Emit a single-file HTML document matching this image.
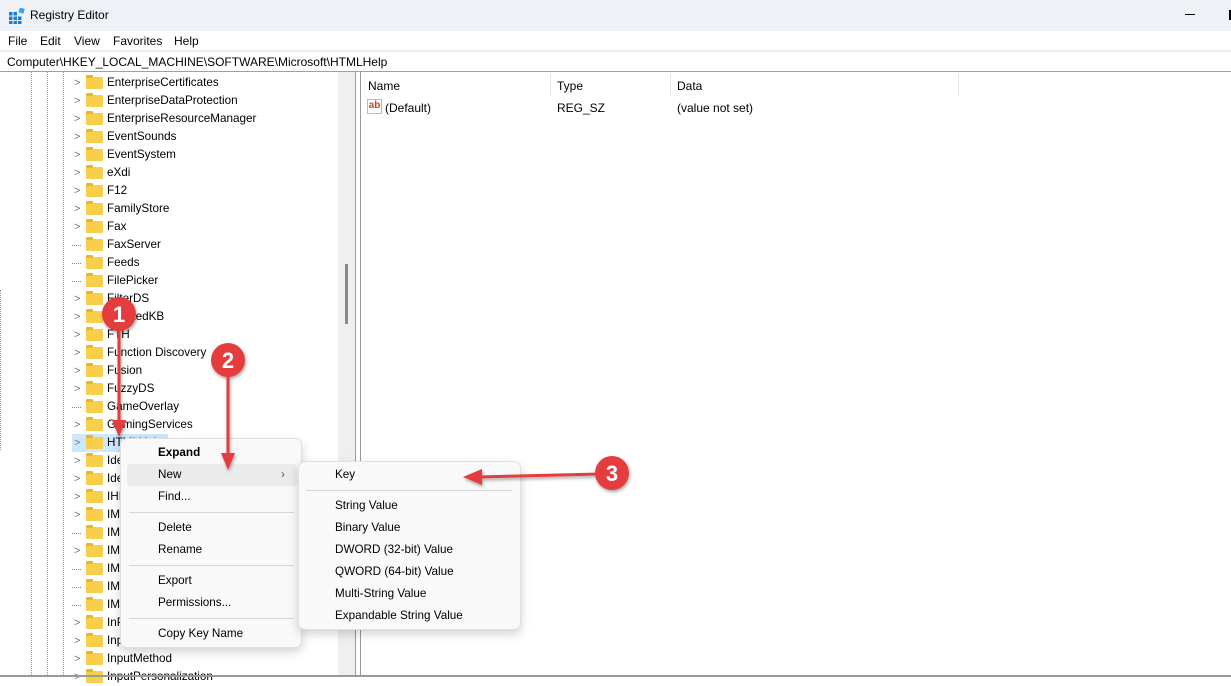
<!DOCTYPE html>
<html><head><style>
*{margin:0;padding:0;box-sizing:border-box}
body{width:1231px;height:677px;overflow:hidden;background:#fff;font-family:"Liberation Sans",sans-serif;font-size:12px;color:#000;position:relative}
.abs{position:absolute}
.title{left:0;top:0;width:1231px;height:31px;background:#eef2f6}
.row{position:absolute;height:18px;line-height:18px;white-space:nowrap;font-size:11.7px}
.fold{position:absolute;width:17px;height:12px;background:#f8cf4a;border-radius:1px;top:3px}
.fold:before{content:"";position:absolute;left:0;top:-2px;width:7px;height:3px;background:#e8b530;border-radius:1px 1px 0 0}
.chev{position:absolute;color:#777;font-size:11px;top:0}
.dot{position:absolute;border-top:1px dotted #888;width:9px;top:9px}
.vd{position:absolute;top:72px;height:605px;border-left:1px dotted #999}
.menu{background:#f9f9f9;border:1px solid #e0e0e0;border-radius:7px;box-shadow:0 4px 10px rgba(0,0,0,.18)}
.mi{position:absolute;height:22px;line-height:22px;white-space:nowrap;font-size:11.7px}
.sep{position:absolute;height:1px;background:#d6d6d6}
</style></head><body>
<div class="abs title"></div>
<svg class="abs" style="left:9px;top:8px" width="16" height="16" viewBox="0 0 16 16">
<g fill="#1a7fd4"><rect x="0" y="4" width="3.5" height="3.5"/><rect x="4.5" y="4" width="3.5" height="3.5"/><rect x="0" y="8.5" width="3.5" height="3.5"/><rect x="4.5" y="8.5" width="3.5" height="3.5"/><rect x="9" y="8.5" width="3.5" height="3.5"/><rect x="0" y="13" width="3.5" height="3"/><rect x="4.5" y="13" width="3.5" height="3"/><rect x="9" y="13" width="3.5" height="3"/></g><rect x="10" y="0" width="5" height="5" fill="#3aa0f0" transform="rotate(15 12 3)"/></svg>
<div class="abs" style="left:30px;top:8px;font-size:12px">Registry Editor</div>
<div class="abs" style="left:1185px;top:14px;width:10px;height:1px;background:#000"></div>
<div class="abs" style="left:1229px;top:10px;width:2px;height:10px;background:#000"></div>
<div class="abs" style="left:8px;top:34px">File</div>
<div class="abs" style="left:40px;top:34px">Edit</div>
<div class="abs" style="left:74px;top:34px">View</div>
<div class="abs" style="left:113px;top:34px">Favorites</div>
<div class="abs" style="left:174px;top:34px">Help</div>
<div class="abs" style="left:0;top:50px;width:1231px;height:2px;background:#eeeeee"></div>
<div class="abs" style="left:7px;top:55px">Computer\HKEY_LOCAL_MACHINE\SOFTWARE\Microsoft\HTMLHelp</div>
<div class="abs" style="left:0;top:71px;width:1231px;height:1px;background:#a0a0a0"></div>
<div class="vd" style="left:31px"></div><div class="vd" style="left:47px"></div><div class="vd" style="left:63px"></div>
<div class="abs" style="left:0;top:290px;width:2px;height:160px;border-left:1px dotted #999"></div>
<div class="abs" style="left:72px;top:434px;width:96px;height:18px;background:#cce8ff"></div>
<div id="tree"></div>
<div class="abs" style="left:338px;top:72px;width:17px;height:605px;background:#efefef"></div>
<div class="abs" style="left:345px;top:264px;width:3px;height:60px;background:#8a8a8a"></div>
<div class="abs" style="left:355px;top:72px;width:1px;height:605px;background:#999"></div>
<div class="abs" style="left:360px;top:72px;width:1px;height:605px;background:#999"></div>
<div class="abs" style="left:0;top:675px;width:1231px;height:2px;background:#999"></div>
<div class="abs" style="left:368px;top:79px">Name</div>
<div class="abs" style="left:557px;top:79px">Type</div>
<div class="abs" style="left:677px;top:79px">Data</div>
<div class="abs" style="left:550px;top:74px;width:1px;height:22px;background:#e5e5e5"></div>
<div class="abs" style="left:670px;top:74px;width:1px;height:22px;background:#e5e5e5"></div>
<div class="abs" style="left:958px;top:74px;width:1px;height:22px;background:#e5e5e5"></div>
<div class="abs" style="left:367px;top:99px;width:15px;height:15px;border:1px solid #bbb;background:#fff;color:#d04020;font-weight:bold;font-size:10px;line-height:12px;text-align:center">ab</div>
<div class="abs" style="left:385px;top:101px">(Default)</div>
<div class="abs" style="left:557px;top:101px">REG_SZ</div>
<div class="abs" style="left:677px;top:101px">(value not set)</div>
<div class="abs menu" style="left:120px;top:438px;width:182px;height:210px"></div>
<div class="abs" style="left:127px;top:464px;width:170px;height:22px;background:#ebebeb;border-radius:4px"></div>
<div class="mi" style="left:158px;top:442px;font-weight:bold">Expand</div>
<div class="mi" style="left:158px;top:464px">New</div>
<div class="mi" style="left:281px;top:464px;color:#555">›</div>
<div class="mi" style="left:158px;top:486px">Find...</div>
<div class="sep" style="left:129px;top:512px;width:165px"></div>
<div class="mi" style="left:158px;top:517px">Delete</div>
<div class="mi" style="left:158px;top:539px">Rename</div>
<div class="sep" style="left:129px;top:565px;width:165px"></div>
<div class="mi" style="left:158px;top:570px">Export</div>
<div class="mi" style="left:158px;top:592px">Permissions...</div>
<div class="sep" style="left:129px;top:618px;width:165px"></div>
<div class="mi" style="left:158px;top:623px">Copy Key Name</div>
<div class="abs menu" style="left:298px;top:461px;width:223px;height:169px"></div>
<div class="mi" style="left:335px;top:464px">Key</div>
<div class="sep" style="left:306px;top:490px;width:206px"></div>
<div class="mi" style="left:335px;top:495px">String Value</div>
<div class="mi" style="left:335px;top:517px">Binary Value</div>
<div class="mi" style="left:335px;top:539px">DWORD (32-bit) Value</div>
<div class="mi" style="left:335px;top:561px">QWORD (64-bit) Value</div>
<div class="mi" style="left:335px;top:583px">Multi-String Value</div>
<div class="mi" style="left:335px;top:605px">Expandable String Value</div>
<svg class="abs" style="left:0;top:0" width="1231" height="677">
<defs><filter id="s"><feDropShadow dx="1" dy="2" stdDeviation="1.5" flood-opacity=".35"/></filter></defs>
<g stroke="#e53c3c" stroke-width="3" fill="#e53c3c" filter="url(#s)">
<line x1="119" y1="320" x2="119" y2="425"/><polygon points="112,420 126,420 119,437" stroke="none"/>
<line x1="228" y1="370" x2="228" y2="458"/><polygon points="221,453 235,453 228,470" stroke="none"/>
<line x1="600" y1="474" x2="478" y2="477"/><polygon points="482,469 482,485 463,477" stroke="none"/>
<circle cx="119" cy="314" r="17" stroke="none"/><circle cx="228" cy="360" r="17" stroke="none"/><circle cx="612" cy="473" r="17" stroke="none"/>
</g>
<g fill="#fff" font-family="Liberation Sans" font-weight="bold" font-size="22" text-anchor="middle">
<text x="119" y="322">1</text><text x="228" y="368">2</text><text x="612" y="481">3</text></g>
</svg>
<script>
var items=[["EnterpriseCertificates",1],["EnterpriseDataProtection",1],["EnterpriseResourceManager",1],["EventSounds",1],["EventSystem",1],["eXdi",1],["F12",1],["FamilyStore",1],["Fax",1],["FaxServer",0],["Feeds",0],["FilePicker",0],["FilterDS",1],["FlightedKB",1],["FTH",1],["Function Discovery",1],["Fusion",1],["FuzzyDS",1],["GameOverlay",0],["GamingServices",1],["HTMLHelp",1],["IdentityCRL",1],["IdentityStore",1],["IHDS",1],["IMEMIP",1],["IMEJP",0],["IMEKR",1],["IMETC",0],["IMETIP",0],["IMEPAD",0],["InProc",1],["Input",1],["InputMethod",1],["InputPersonalization",1]];
var h="";items.forEach(function(it,i){var y=74+i*18;
h+='<div class="row" style="left:0;top:'+y+'px;width:338px">'+(it[1]?'<span class="chev" style="left:74px">&gt;</span>':'<span class="dot" style="left:72px"></span>')+'<span class="fold" style="left:86px"></span><span style="position:absolute;left:107px">'+it[0]+'</span></div>';});
document.getElementById("tree").innerHTML=h;
</script>
</body></html>
